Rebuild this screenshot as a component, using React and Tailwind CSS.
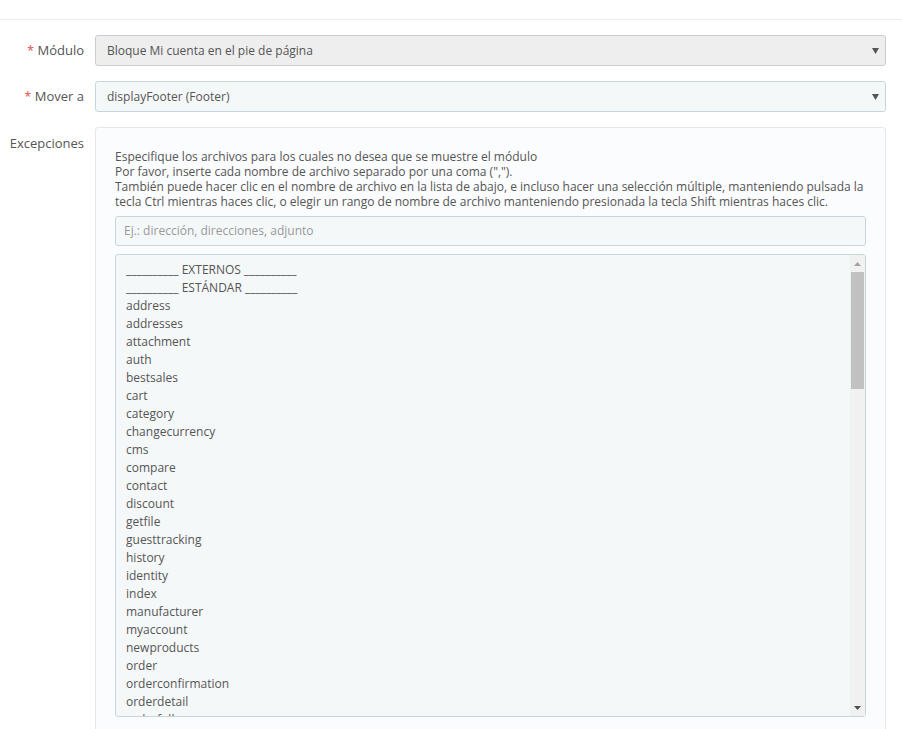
import React from 'react';

const files = [
  '__________ EXTERNOS __________',
  '__________ ESTÁNDAR __________',
  'address', 'addresses', 'attachment', 'auth', 'bestsales', 'cart', 'category',
  'changecurrency', 'cms', 'compare', 'contact', 'discount', 'getfile',
  'guesttracking', 'history', 'identity', 'index', 'manufacturer', 'myaccount',
  'newproducts', 'order', 'orderconfirmation', 'orderdetail', 'orderfollow',
  'orderopc', 'orderreturn',
];

const Caret = () => (
  <svg width="7" height="6" viewBox="0 0 7 6" className="shrink-0">
    <polygon points="0,0 7,0 3.5,6" fill="#555" />
  </svg>
);

const Label = ({ required, children, className = '' }) => (
  <div className={`w-[95px] shrink-0 pr-[11px] text-right text-[13px] text-[#555] ${className}`}>
    {required && <span className="text-[#e2504c]">* </span>}
    {children}
  </div>
);

export default function App() {
  return (
    <div className="min-h-screen bg-white font-['Open_Sans',sans-serif] text-[#555]">
      {/* header rule */}
      <div className="h-[20px] border-b border-[#ececec]" />

      <div className="flex flex-col gap-[15px] pt-[15px] pr-[16px]">
        {/* Module */}
        <div className="flex items-center">
          <Label required>Módulo</Label>
          <div className="flex h-[31px] flex-1 items-center justify-between rounded-[3px] border border-[#ccc] bg-[#eeeeee] pl-[11px] pr-[6px] text-[12px]">
            <span>Bloque Mi cuenta en el pie de página</span>
            <Caret />
          </div>
        </div>

        {/* Move to */}
        <div className="flex items-center">
          <Label required>Mover a</Label>
          <div className="flex h-[31px] flex-1 items-center justify-between rounded-[3px] border border-[#c7d6db] bg-[#f5f8f9] pl-[11px] pr-[6px] text-[12px]">
            <span>displayFooter (Footer)</span>
            <Caret />
          </div>
        </div>

        {/* Exceptions */}
        <div className="flex items-start">
          <Label className="pt-[7px] leading-[18px]">Excepciones</Label>
          <div className="flex-1 rounded-[3px] border border-[#e3e8ec] bg-[#fbfcfd] px-[19px] pt-[21px] pb-[20px]">
            <p className="whitespace-nowrap text-[12px] leading-[15px]">
              Especifique los archivos para los cuales no desea que se muestre el módulo
              <br />
              Por favor, inserte cada nombre de archivo separado por una coma (",").
              <br />
              También puede hacer clic en el nombre de archivo en la lista de abajo, e incluso hacer una selección múltiple, manteniendo pulsada la
              <br />
              tecla Ctrl mientras haces clic, o elegir un rango de nombre de archivo manteniendo presionada la tecla Shift mientras haces clic.
            </p>

            <div className="mt-[7px] flex h-[30px] items-center rounded-[3px] border border-[#c7d6db] bg-[#f5f8f9] pl-[8px] text-[12px] text-[#999]">
              Ej.: dirección, direcciones, adjunto
            </div>

            <div className="mt-[8px] flex h-[463px] rounded-[3px] border border-[#c7d6db] bg-[#f5f8f9]">
              <div className="flex-1 overflow-hidden pl-[10px] pt-[6px]">
                {files.map((f) => (
                  <div key={f} className="whitespace-nowrap text-[12px] leading-[18px]">
                    {f}
                  </div>
                ))}
              </div>

              {/* scrollbar */}
              <div className="flex w-[15px] shrink-0 flex-col bg-[#f1f1f1]">
                <div className="flex h-[17px] items-center justify-center">
                  <svg width="7" height="4" viewBox="0 0 7 4">
                    <polygon points="0,4 7,4 3.5,0" fill="#a3a3a3" />
                  </svg>
                </div>
                <div className="mx-auto h-[117px] w-[13px] bg-[#c1c1c1]" />
                <div className="flex-1" />
                <div className="flex h-[17px] items-center justify-center">
                  <svg width="7" height="4" viewBox="0 0 7 4">
                    <polygon points="0,0 7,0 3.5,4" fill="#505050" />
                  </svg>
                </div>
              </div>
            </div>
          </div>
        </div>
      </div>
    </div>
  );
}
